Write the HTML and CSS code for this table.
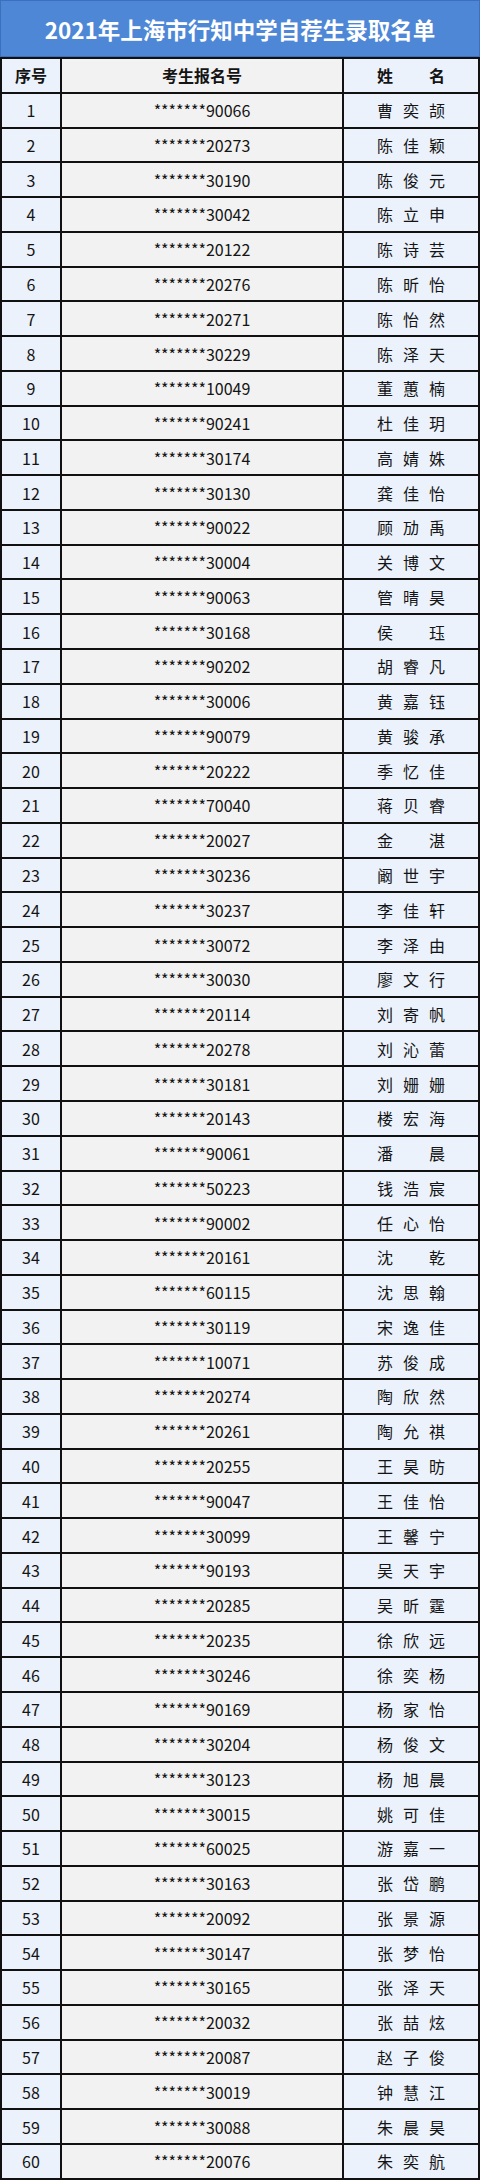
FILE: index.html
```html
<!DOCTYPE html>
<html lang="zh">
<head>
<meta charset="utf-8">
<title>2021年上海市行知中学自荐生录取名单</title>
<link rel="stylesheet" href="styles.css">
</head>
<body>
<div class="sheet">
  <div class="title">2021年上海市行知中学自荐生录取名单</div>
  <div class="grid">
    <div class="c1 head">序号</div><div class="c2 head">考生报名号</div><div class="c3 head"><span class="nm"><span>姓</span><span>名</span></span></div>
    <div class="c1">1</div><div class="c2">*******90066</div><div class="c3"><span class="nm"><span>曹</span><span>奕</span><span>颉</span></span></div>
    <div class="c1">2</div><div class="c2">*******20273</div><div class="c3"><span class="nm"><span>陈</span><span>佳</span><span>颖</span></span></div>
    <div class="c1">3</div><div class="c2">*******30190</div><div class="c3"><span class="nm"><span>陈</span><span>俊</span><span>元</span></span></div>
    <div class="c1">4</div><div class="c2">*******30042</div><div class="c3"><span class="nm"><span>陈</span><span>立</span><span>申</span></span></div>
    <div class="c1">5</div><div class="c2">*******20122</div><div class="c3"><span class="nm"><span>陈</span><span>诗</span><span>芸</span></span></div>
    <div class="c1">6</div><div class="c2">*******20276</div><div class="c3"><span class="nm"><span>陈</span><span>昕</span><span>怡</span></span></div>
    <div class="c1">7</div><div class="c2">*******20271</div><div class="c3"><span class="nm"><span>陈</span><span>怡</span><span>然</span></span></div>
    <div class="c1">8</div><div class="c2">*******30229</div><div class="c3"><span class="nm"><span>陈</span><span>泽</span><span>天</span></span></div>
    <div class="c1">9</div><div class="c2">*******10049</div><div class="c3"><span class="nm"><span>董</span><span>蕙</span><span>楠</span></span></div>
    <div class="c1">10</div><div class="c2">*******90241</div><div class="c3"><span class="nm"><span>杜</span><span>佳</span><span>玥</span></span></div>
    <div class="c1">11</div><div class="c2">*******30174</div><div class="c3"><span class="nm"><span>高</span><span>婧</span><span>姝</span></span></div>
    <div class="c1">12</div><div class="c2">*******30130</div><div class="c3"><span class="nm"><span>龚</span><span>佳</span><span>怡</span></span></div>
    <div class="c1">13</div><div class="c2">*******90022</div><div class="c3"><span class="nm"><span>顾</span><span>劢</span><span>禹</span></span></div>
    <div class="c1">14</div><div class="c2">*******30004</div><div class="c3"><span class="nm"><span>关</span><span>博</span><span>文</span></span></div>
    <div class="c1">15</div><div class="c2">*******90063</div><div class="c3"><span class="nm"><span>管</span><span>晴</span><span>昊</span></span></div>
    <div class="c1">16</div><div class="c2">*******30168</div><div class="c3"><span class="nm"><span>侯</span><span>珏</span></span></div>
    <div class="c1">17</div><div class="c2">*******90202</div><div class="c3"><span class="nm"><span>胡</span><span>睿</span><span>凡</span></span></div>
    <div class="c1">18</div><div class="c2">*******30006</div><div class="c3"><span class="nm"><span>黄</span><span>嘉</span><span>钰</span></span></div>
    <div class="c1">19</div><div class="c2">*******90079</div><div class="c3"><span class="nm"><span>黄</span><span>骏</span><span>承</span></span></div>
    <div class="c1">20</div><div class="c2">*******20222</div><div class="c3"><span class="nm"><span>季</span><span>忆</span><span>佳</span></span></div>
    <div class="c1">21</div><div class="c2">*******70040</div><div class="c3"><span class="nm"><span>蒋</span><span>贝</span><span>睿</span></span></div>
    <div class="c1">22</div><div class="c2">*******20027</div><div class="c3"><span class="nm"><span>金</span><span>湛</span></span></div>
    <div class="c1">23</div><div class="c2">*******30236</div><div class="c3"><span class="nm"><span>阚</span><span>世</span><span>宇</span></span></div>
    <div class="c1">24</div><div class="c2">*******30237</div><div class="c3"><span class="nm"><span>李</span><span>佳</span><span>轩</span></span></div>
    <div class="c1">25</div><div class="c2">*******30072</div><div class="c3"><span class="nm"><span>李</span><span>泽</span><span>由</span></span></div>
    <div class="c1">26</div><div class="c2">*******30030</div><div class="c3"><span class="nm"><span>廖</span><span>文</span><span>行</span></span></div>
    <div class="c1">27</div><div class="c2">*******20114</div><div class="c3"><span class="nm"><span>刘</span><span>寄</span><span>帆</span></span></div>
    <div class="c1">28</div><div class="c2">*******20278</div><div class="c3"><span class="nm"><span>刘</span><span>沁</span><span>蕾</span></span></div>
    <div class="c1">29</div><div class="c2">*******30181</div><div class="c3"><span class="nm"><span>刘</span><span>姗</span><span>姗</span></span></div>
    <div class="c1">30</div><div class="c2">*******20143</div><div class="c3"><span class="nm"><span>楼</span><span>宏</span><span>海</span></span></div>
    <div class="c1">31</div><div class="c2">*******90061</div><div class="c3"><span class="nm"><span>潘</span><span>晨</span></span></div>
    <div class="c1">32</div><div class="c2">*******50223</div><div class="c3"><span class="nm"><span>钱</span><span>浩</span><span>宸</span></span></div>
    <div class="c1">33</div><div class="c2">*******90002</div><div class="c3"><span class="nm"><span>任</span><span>心</span><span>怡</span></span></div>
    <div class="c1">34</div><div class="c2">*******20161</div><div class="c3"><span class="nm"><span>沈</span><span>乾</span></span></div>
    <div class="c1">35</div><div class="c2">*******60115</div><div class="c3"><span class="nm"><span>沈</span><span>思</span><span>翰</span></span></div>
    <div class="c1">36</div><div class="c2">*******30119</div><div class="c3"><span class="nm"><span>宋</span><span>逸</span><span>佳</span></span></div>
    <div class="c1">37</div><div class="c2">*******10071</div><div class="c3"><span class="nm"><span>苏</span><span>俊</span><span>成</span></span></div>
    <div class="c1">38</div><div class="c2">*******20274</div><div class="c3"><span class="nm"><span>陶</span><span>欣</span><span>然</span></span></div>
    <div class="c1">39</div><div class="c2">*******20261</div><div class="c3"><span class="nm"><span>陶</span><span>允</span><span>祺</span></span></div>
    <div class="c1">40</div><div class="c2">*******20255</div><div class="c3"><span class="nm"><span>王</span><span>昊</span><span>昉</span></span></div>
    <div class="c1">41</div><div class="c2">*******90047</div><div class="c3"><span class="nm"><span>王</span><span>佳</span><span>怡</span></span></div>
    <div class="c1">42</div><div class="c2">*******30099</div><div class="c3"><span class="nm"><span>王</span><span>馨</span><span>宁</span></span></div>
    <div class="c1">43</div><div class="c2">*******90193</div><div class="c3"><span class="nm"><span>吴</span><span>天</span><span>宇</span></span></div>
    <div class="c1">44</div><div class="c2">*******20285</div><div class="c3"><span class="nm"><span>吴</span><span>昕</span><span>霆</span></span></div>
    <div class="c1">45</div><div class="c2">*******20235</div><div class="c3"><span class="nm"><span>徐</span><span>欣</span><span>远</span></span></div>
    <div class="c1">46</div><div class="c2">*******30246</div><div class="c3"><span class="nm"><span>徐</span><span>奕</span><span>杨</span></span></div>
    <div class="c1">47</div><div class="c2">*******90169</div><div class="c3"><span class="nm"><span>杨</span><span>家</span><span>怡</span></span></div>
    <div class="c1">48</div><div class="c2">*******30204</div><div class="c3"><span class="nm"><span>杨</span><span>俊</span><span>文</span></span></div>
    <div class="c1">49</div><div class="c2">*******30123</div><div class="c3"><span class="nm"><span>杨</span><span>旭</span><span>晨</span></span></div>
    <div class="c1">50</div><div class="c2">*******30015</div><div class="c3"><span class="nm"><span>姚</span><span>可</span><span>佳</span></span></div>
    <div class="c1">51</div><div class="c2">*******60025</div><div class="c3"><span class="nm"><span>游</span><span>嘉</span><span>一</span></span></div>
    <div class="c1">52</div><div class="c2">*******30163</div><div class="c3"><span class="nm"><span>张</span><span>岱</span><span>鹏</span></span></div>
    <div class="c1">53</div><div class="c2">*******20092</div><div class="c3"><span class="nm"><span>张</span><span>景</span><span>源</span></span></div>
    <div class="c1">54</div><div class="c2">*******30147</div><div class="c3"><span class="nm"><span>张</span><span>梦</span><span>怡</span></span></div>
    <div class="c1">55</div><div class="c2">*******30165</div><div class="c3"><span class="nm"><span>张</span><span>泽</span><span>天</span></span></div>
    <div class="c1">56</div><div class="c2">*******20032</div><div class="c3"><span class="nm"><span>张</span><span>喆</span><span>炫</span></span></div>
    <div class="c1">57</div><div class="c2">*******20087</div><div class="c3"><span class="nm"><span>赵</span><span>子</span><span>俊</span></span></div>
    <div class="c1">58</div><div class="c2">*******30019</div><div class="c3"><span class="nm"><span>钟</span><span>慧</span><span>江</span></span></div>
    <div class="c1">59</div><div class="c2">*******30088</div><div class="c3"><span class="nm"><span>朱</span><span>晨</span><span>昊</span></span></div>
    <div class="c1">60</div><div class="c2">*******20076</div><div class="c3"><span class="nm"><span>朱</span><span>奕</span><span>航</span></span></div>
  </div>
</div>
</body>
</html>
```

FILE: styles.css
```css
html, body {
  margin: 0;
  padding: 0;
  background: #ffffff;
}

.sheet {
  width: 480px;
  font-family: "Noto Sans CJK SC", "Noto Sans", sans-serif;
  color: #141414;
}

.title {
  box-sizing: border-box;
  height: 57px;
  background: #4f87d7;
  border: 1px solid #3c6fbe;
  color: #ffffff;
  font-weight: 700;
  font-size: 22.5px;
  display: flex;
  align-items: center;
  justify-content: center;
}

.grid {
  display: grid;
  grid-template-columns: 58px 280px 134px;
  grid-auto-rows: 32.78px;
  gap: 2px;
  padding: 2px;
  background: #111111;
}

.grid > div {
  display: flex;
  align-items: center;
  justify-content: center;
  font-size: 16px;
  line-height: 1;
}

.c1,
.c3 {
  background: #ebf2fc;
}

.c2 {
  background: #f2f2f2;
}

.head {
  font-weight: 700;
  font-size: 16.5px;
}

.nm {
  display: flex;
  justify-content: space-between;
  width: 68px;
}
```
